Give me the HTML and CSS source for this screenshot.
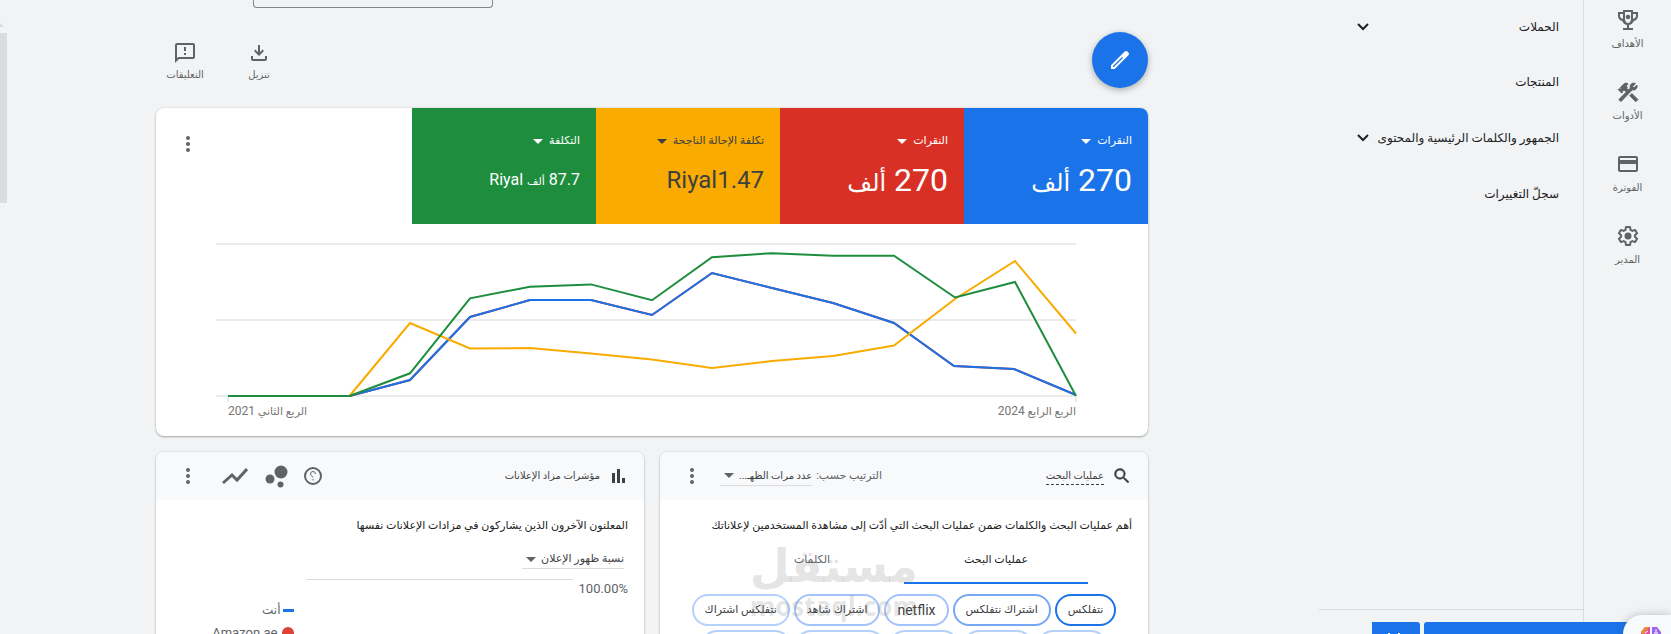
FILE: index.html
```html
<!DOCTYPE html>
<html lang="ar" dir="rtl">
<head>
<meta charset="utf-8">
<title>نظرة عامة</title>
<link rel="stylesheet" href="styles.css">
</head>
<body>
<div class="app">
  <nav class="rail">
    <a class="rail-item" href="#"><svg viewBox="0 0 24 24"><path d="M19 4h-2V2H7v2H2v4c0 2.600 1.800 4.700 4.300 4.950A6 6 0 0 0 11 16.900V20H7v2h10v-2h-4v-3.100a6 6 0 0 0 4.700-3.950C20.200 12.700 22 10.600 22 8V4zM4 8V6h3v4.800C5.200 10.400 4 9.400 4 8zm11 3c0 2.200-1.300 4-3 4s-3-1.800-3-4V4h6zm5-3c0 1.400-1.200 2.400-3 2.800V6h3z"/><circle cx="12" cy="9" r="2.300"/></svg><span>الأهداف</span></a>
    <a class="rail-item" href="#"><svg class="bold" viewBox="0 0 24 24"><path d="m13.800 15.700 2.100-2.100 6 6-2.100 2.100zM17.500 10a3.500 3.500 0 0 0 3.300-4.900l-2.700 2.700-1.500-1.500 2.700-2.700A3.500 3.500 0 0 0 14.400 8.100l-1.900 1.900-1.800-1.800.7-.7L10 6.100l2.100-2.100a3 3 0 0 0-4.200 0L4.300 7.500l1.400 1.400H2.900l-.7.7 3.500 3.500.7-.7V9.600l1.400 1.400.7-.7 1.800 1.800-7.400 7.400 2.100 2.100L16.300 9.800c.4.1.8.2 1.200.2z"/></svg><span>الأدوات</span></a>
    <a class="rail-item" href="#"><svg viewBox="0 0 24 24"><path fill-rule="evenodd" d="M20 4H4a2 2 0 0 0-2 2v12c0 1.100.9 2 2 2h16a2 2 0 0 0 2-2V6a2 2 0 0 0-2-2zm0 14H4v-6h16zm0-10H4V6h16z"/></svg><span>الفوترة</span></a>
    <a class="rail-item" href="#"><svg viewBox="0 0 24 24"><path fill="none" stroke="currentColor" stroke-width="2" stroke-linejoin="round" d="M10 3h4l.5 2.800 1.900 1.100 2.700-1 2 3.400-2.200 1.900v1.600l2.200 1.900-2 3.400-2.700-1-1.900 1.100L14 21h-4l-.5-2.800-1.900-1.100-2.700 1-2-3.400 2.200-1.900v-1.600L2.900 9.300l2-3.400 2.700 1 1.900-1.100z"/><circle cx="12" cy="12" r="3.500"/></svg><span>المدير</span></a>
  </nav>

  <aside class="side">
    <ul class="side-list">
      <li><a href="#">الحملات<svg viewBox="0 0 12 8"><path d="m1 1 5 5 5-5"/></svg></a></li>
      <li><a href="#">المنتجات</a></li>
      <li><a href="#">الجمهور والكلمات الرئيسية والمحتوى<svg viewBox="0 0 12 8"><path d="m1 1 5 5 5-5"/></svg></a></li>
      <li><a href="#">سجلّ التغييرات</a></li>
    </ul>
    <div class="side-foot"></div>
  </aside>

  <main class="main">
    <div class="top"><button class="date-box" aria-label="النطاق الزمني"></button></div>
    <div class="toolbar">
      <button class="fab" aria-label="تعديل"><svg viewBox="0 0 24 24"><path fill-rule="evenodd" d="M3 17.300V21h3.700L20.400 7.300c.8-.8.8-2 0-2.800l-.9-.9c-.8-.8-2-.8-2.800 0zM5.900 19H5v-.9l9.100-9.100.9.900z"/></svg></button>
      <div class="tools">
        <button class="tool"><svg viewBox="0 0 24 24"><path d="M11 4h2v7.200l2.600-2.600L17 10l-5 5-5-5 1.400-1.400 2.600 2.600zM4 15h2v3h12v-3h2v3a2 2 0 0 1-2 2H6a2 2 0 0 1-2-2z"/></svg><span>تنزيل</span></button>
        <button class="tool"><svg viewBox="0 0 24 24"><path fill-rule="evenodd" d="M20 2H4a2 2 0 0 0-2 2v18l4-4h14a2 2 0 0 0 2-2V4a2 2 0 0 0-2-2zm0 14H5.200L4 17.200V4h16zM11 6h2v4h-2zm0 6h2v2h-2z"/></svg><span>التعليقات</span></button>
      </div>
    </div>

    <section class="card overview">
      <div class="tiles">
        <button class="tile blue"><span class="tile-label">النقرات<i class="caret"></i></span><span class="value">270 <span class="unit">ألف</span></span></button>
        <button class="tile red"><span class="tile-label">النقرات<i class="caret"></i></span><span class="value">270 <span class="unit">ألف</span></span></button>
        <button class="tile yellow"><span class="tile-label">تكلفة الإحالة الناجحة<i class="caret"></i></span><span class="value medium">Riyal1.47</span></button>
        <button class="tile green"><span class="tile-label">التكلفة<i class="caret"></i></span><span class="value small">87.7 <span class="unit">ألف</span> Riyal</span></button>
        <button class="kebab" aria-label="المزيد"><i></i><i></i><i></i></button>
      </div>
      <div class="chart">
        <svg viewBox="0 0 860 160" role="img" aria-label="الأداء">
          <path class="grid" d="M0 4h860M0 80h860M0 156h860M12 156v6M860 156v6"/>
          <path class="line c-red" d="M12 156H133.500L194 140l60-63 60-17h61l61 15 60-42 60 15 61 15 61 20 60 43 60 3 62 26"/>
          <path class="line c-blue" d="M12 156H133.500L194 140l60-63 60-17h61l61 15 60-42 60 15 61 15 61 20 60 43 60 3 62 26"/>
          <path class="line c-yellow" d="M133.500 156 194 83l60 25.500 60-.5 61 5.500 61 6 60 8.500 60-7 61-5 61-10.500L739 59l60-38 61 72.500"/>
          <path class="line c-green" d="M12 156H133.500L194 133.300l60-75 60-11.600 61-2.300 61 15.800 60-43 60-4 61 2.500h61L739 57.500l60-15.500 61 114"/>
        </svg>
        <div class="axis"><span>الربع الرابع <span class="year">2024</span></span><span>الربع الثاني <span class="year">2021</span></span></div>
      </div>
    </section>

    <div class="pair">
      <section class="card">
        <header class="head">
          <svg class="i20 semi" viewBox="0 0 24 24"><path fill-rule="evenodd" d="M15.500 14h-.8l-.3-.3A6.500 6.500 0 1 0 13.700 14.400l.3.300v.8l5 5 1.500-1.500zm-6 0a4.500 4.500 0 1 1 0-9 4.500 4.500 0 0 1 0 9z"/></svg>
          <a class="title dashed" href="#">عمليات البحث</a>
          <span class="sort">الترتيب حسب: <button class="select">عدد مرات الظهـ...<i class="caret"></i></button></span>
          <button class="kebab" aria-label="المزيد"><i></i><i></i><i></i></button>
        </header>
        <p class="desc">أهم عمليات البحث والكلمات ضمن عمليات البحث التي أدّت إلى مشاهدة المستخدمين لإعلاناتك</p>
        <div class="tabs"><button class="tab on">عمليات البحث</button><button class="tab">الكلمات</button></div>
        <div class="chips">
          <button class="chip t1">نتفلكس</button><button class="chip t2">اشتراك نتفلكس</button><button class="chip t3 latin">netflix</button><button class="chip t3">اشتراك شاهد</button><button class="chip t4">نتفلكس اشتراك</button>
        </div>
        <div class="chips next">
          <button class="chip t4 w-s"></button><button class="chip t4 w-s"></button><button class="chip t4 w-s"></button><button class="chip t4 w-l"></button><button class="chip t4 w-l"></button>
        </div>
        <div class="watermark" aria-hidden="true"><b>مستقل</b><span>mostaql.com</span></div>
      </section>

      <section class="card">
        <header class="head">
          <svg class="i20" viewBox="0 0 20 20"><path d="M4 7h3v10H4zM9 3h3v14H9zM14 12h3v5h-3z"/></svg>
          <span class="title">مؤشرات مزاد الإعلانات</span>
          <span class="icons">
            <svg class="help" viewBox="0 0 18 18"><circle cx="9" cy="9" r="8"/><path d="M11.500 7a2.500 2.500 0 0 0-5 0c0 2 2.500 2 2.500 3.500M9 12v1.500"/></svg>
            <svg class="bub" viewBox="0 0 24 24"><circle cx="17" cy="8" r="6.500"/><circle cx="6" cy="15" r="4.500"/><circle cx="16.500" cy="20.500" r="3"/></svg>
            <svg class="trend" viewBox="0 0 26 18"><path d="m1 16 9-8 5 5L25 2"/></svg>
            <button class="kebab" aria-label="المزيد"><i></i><i></i><i></i></button>
          </span>
        </header>
        <p class="desc">المعلنون الآخرون الذين يشاركون في مزادات الإعلانات نفسها</p>
        <button class="select metric">نسبة ظهور الإعلان<i class="caret"></i></button>
        <div class="share">
          <span class="pct">100.00%</span>
          <div class="plot"></div>
          <ul class="legend"><li><i class="dash"></i>أنت</li><li class="name"><i class="dot"></i><span dir="ltr">Amazon.ae</span></li></ul>
        </div>
      </section>
    </div>
  </main>
</div>
<div class="scrollbar"></div>
<div class="banner"><button class="wide" aria-label="فتح"></button><button class="close" aria-label="إغلاق"><svg viewBox="0 0 20 4"><path d="m2 4 1-1 1 1M12 4l1-1 1 1"/></svg></button></div>
<button class="assist" aria-label="مساعد"><svg viewBox="0 0 20 20"><path d="M9 2v16H4L0 12V7l4-5z" fill="#e04fa0"/><path d="M0 7l4-5h4L2 10z" fill="#f08a3c"/><path d="M11 2v16h5l4-6V7l-4-5z" fill="#9a63e8"/><path d="M4 8l3-2M15 4v4m-2 0h4" stroke="#fff" fill="none"/></svg></button>
</body>
</html>
```
FILE: styles.css
```css
* { box-sizing: border-box; }
html, body { height: 100%; overflow: hidden; }
body { margin: 0; background: #f1f3f4; color: #202124; font: 12px/20px Roboto, "DejaVu Sans", sans-serif; }
button { font: inherit; color: inherit; background: none; border: 0; padding: 0; }
a { color: inherit; text-decoration: none; }
svg { fill: currentColor; flex: none; }
ul { list-style: none; margin: 0; padding: 0; }
.bold { stroke: currentColor; stroke-width: 1; }
.semi { stroke: currentColor; stroke-width: 0.5; }
.latin { font-size: 14px; }
.app { display: flex; height: 100vh; overflow: hidden; }
.rail { width: 88px; flex: none; border-left: 1px solid #dadce0; padding-top: 8px; }
.rail-item { display: flex; flex-direction: column; align-items: center; gap: 2px; height: 72px; font-size: 10px; color: #5f6368; }
.rail-item svg { width: 24px; height: 24px; }
.side { width: 264px; flex: none; display: flex; flex-direction: column; }
.side-list { flex: 1; }
.side-list a { display: flex; align-items: center; justify-content: space-between; height: 56px; padding: 0 24px 0 38px; white-space: nowrap; }
.side-list li:first-child a { height: 54px; }
.side-list svg { width: 12px; height: 8px; fill: none; stroke: currentColor; stroke-width: 2; }
.side-foot { height: 25px; border-top: 1px solid #dadce0; }
.main { flex: 1; padding: 0 171px 0 156px; }
.top { height: 8px; display: flex; justify-content: flex-end; padding-left: 97px; }
.date-box { width: 240px; height: 8px; border: 1px solid #80868b; border-top: 0; border-radius: 0 0 4px 4px; }
.toolbar { display: flex; justify-content: space-between; height: 100px; padding-top: 24px; }
.fab { width: 56px; height: 56px; border-radius: 50%; background: #1a73e8; color: #fff; display: grid; place-items: center; box-shadow: 0 2px 6px rgba(60,64,67,.4); }
.fab svg { width: 24px; height: 24px; }
.tools { display: flex; gap: 16px; padding-top: 9px; }
.tool { width: 58px; display: flex; flex-direction: column; align-items: center; font-size: 10px; color: #5f6368; height: 48px; }
.tool svg { width: 24px; height: 24px; }
.card { position: relative; background: #fff; border-radius: 8px; box-shadow: 0 1px 2px rgba(60,64,67,.4), 0 0 2px rgba(60,64,67,.15); overflow: hidden; }
.overview { height: 328px; }
.tiles { display: flex; height: 116px; }
.tile { width: 184px; padding: 23px 16px 0; display: flex; flex-direction: column; align-items: flex-start; color: #fff; }
.tile-label { display: flex; align-items: center; gap: 6px; font-size: 11px; }
.caret { border: 5px solid transparent; border-top-color: currentColor; border-bottom: 0; }
.value { font-size: 32px; line-height: 40px; margin-top: 9px; }
.value .unit { font-size: 24px; }
.value.medium { font-size: 24px; }
.value.small { font-size: 16px; }
.value.small .unit { font-size: 11px; }
.blue { background: #1a73e8; }
.red { background: #d93025; }
.yellow { background: #f9ab00; color: #3c4043; }
.green { background: #1e8e3e; }
.kebab { width: 16px; height: 20px; display: flex; flex-direction: column; align-items: center; justify-content: center; gap: 2px; color: #5f6368; }
.kebab i { width: 4px; height: 4px; border-radius: 50%; background: currentColor; }
.tiles .kebab { margin: 26px auto 0 24px; }
.chart { padding: 16px 72px 0 60px; }
.chart svg { display: block; width: 100%; overflow: visible; }
.grid { stroke: #ebebeb; stroke-width: 2; fill: none; }
.line { fill: none; stroke-width: 2; }
.c-red { stroke: #d93025; }
.c-blue { stroke: #1a73e8; }
.c-yellow { stroke: #f9ab00; }
.c-green { stroke: #1e8e3e; }
.axis { display: flex; justify-content: space-between; padding-left: 12px; margin-top: 1px; font-size: 11px; color: #757575; }
.year { font-size: 12px; }
.pair { display: grid; grid-template-columns: 1fr 1fr; gap: 16px; margin-top: 16px; }
.pair .card { height: 240px; }
.head { display: flex; align-items: center; height: 48px; background: #f8f9fa; padding: 0 16px 0 24px; color: #3c4043; font-size: 10px; }
.i20 { width: 20px; height: 20px; }
.title { margin-right: 8px; }
.dashed { border-bottom: 1px dashed #3c4043; line-height: 16px; }
.sort { margin: 0 auto 0 20px; color: #5f6368; font-size: 11px; display: flex; gap: 4px; align-items: center; }
.select { display: flex; align-items: center; gap: 5px; border-bottom: 1px solid #dadce0; padding: 0 0 0 4px; color: #3c4043; font-size: 10px; line-height: 18px; }
.select .caret { color: #5f6368; }
.desc { margin: 16px 16px 0; font-size: 11px; white-space: nowrap; }
.tabs { display: grid; grid-template-columns: 184px 184px; margin: 8px 60px 0; }
.tab { height: 40px; border-bottom: 2px solid transparent; color: #5f6368; font-size: 11px; padding-bottom: 6px; }
.tab.on { border-color: #1a73e8; color: #202124; }
.chips { display: flex; justify-content: center; gap: 4px; margin-top: 10px; font-size: 11px; }
.chips.next { margin-top: 4px; }
.chip { height: 32px; padding: 0 11px; border: 2px solid; border-radius: 16px; white-space: nowrap; color: #3c4043; }
.chip.latin { font-size: 14px; }
.w-s { width: 70px; }
.w-l { width: 90px; }
.t1 { border-color: #1a73e8; }
.t2 { border-color: #76a7f5; }
.t3 { border-color: #a1c2fa; }
.t4 { border-color: #b5d0fb; }
.watermark { position: absolute; left: 92px; top: 86px; width: 166px; color: rgba(120,120,120,.2); text-align: center; }
.watermark b { display: block; font: bold 46px/56px "DejaVu Sans", sans-serif; }
.watermark span { display: block; font: bold 26px/24px "Open Sans", sans-serif; }
.icons { display: flex; align-items: center; gap: 16px; margin-right: auto; color: #5f6368; }
.icons .kebab { margin-right: 10px; }
.help { width: 18px; height: 18px; fill: none; stroke: currentColor; stroke-width: 2; }
.help path { stroke-width: 1; }
.bub { width: 24px; height: 24px; }
.trend { width: 26px; height: 18px; fill: none; stroke: currentColor; stroke-width: 3; }
.metric { margin: 14px 20px 0; font-size: 11px; }
.share { display: flex; padding: 10px 16px; color: #5f6368; }
.pct { font-size: 13px; }
.plot { width: 267px; border-top: 1px solid #dadce0; margin-right: 6px; }
.legend { padding-top: 20px; margin-right: 12px; }
.legend li { display: flex; align-items: center; height: 22px; gap: 2px; }
.legend .name { font-size: 13px; height: 24px; gap: 4px; }
.dash { width: 11px; height: 3px; background: #1a73e8; }
.dot { width: 12px; height: 12px; border-radius: 50%; background: #db4437; }
.scrollbar { position: absolute; left: 0; top: 33px; width: 7px; height: 170px; background: #dadce0; }
.scrollbar::before { content: ""; position: absolute; left: 0; top: -10px; border-left: 4px solid #dadce0; border-top: 4px solid transparent; }
.banner { position: absolute; right: 0; bottom: 0; left: 1372px; height: 12px; display: flex; gap: 4px; }
.banner button { background: #1a73e8; border-radius: 0 3px 0 0; color: #fff; overflow: hidden; }
.banner .close { width: 48px; display: flex; align-items: flex-end; justify-content: center; }
.banner .close svg { width: 20px; height: 4px; fill: none; stroke: currentColor; }
.banner .wide { flex: 1; border-radius: 3px 0 0 0; }
.assist { position: absolute; right: 0; bottom: 0; width: 48px; height: 19px; border-radius: 19px 0 0 0; background: #f8f9fa; box-shadow: 0 0 8px rgba(60,64,67,.3); overflow: hidden; }
.assist svg { display: block; width: 20px; height: 20px; margin: 10px 10px 0 0; }
```
